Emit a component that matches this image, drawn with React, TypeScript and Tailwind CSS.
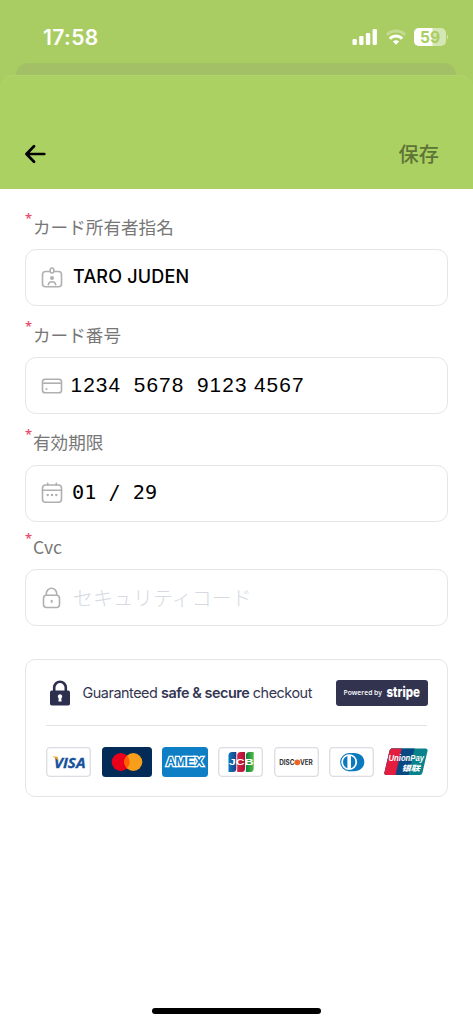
import type { ReactNode } from 'react';

const JP_FONT = "font-['Noto_Sans_CJK_JP',sans-serif]";

function StatusBar() {
  return (
    <div className="flex h-[75px] items-start justify-between pl-[43px] pr-[24px] pt-[24px] text-white">
      <span className="font-['Inter',sans-serif] text-[21px] font-semibold leading-[28px] tracking-[0.400px]">17:58</span>
      <div className="flex items-center gap-[8px] pt-[4px]">
        <svg width="26" height="18" viewBox="0 0 26 18" fill="currentColor">
          <rect x="0.5" y="11" width="4.3" height="6" rx="1.2" />
          <rect x="7.2" y="8" width="4.3" height="9" rx="1.2" />
          <rect x="13.9" y="5" width="4.3" height="12" rx="1.2" />
          <rect x="20.6" y="1" width="4.3" height="16" rx="1.2" />
        </svg>
        <svg width="20" height="18" viewBox="0 0 20 18" fill="none" stroke="currentColor">
          <path d="M0.8 6.8C6 1.7 14 1.7 19.2 6.8" strokeWidth="2.8" opacity="0.3" />
          <path d="M3.8 10.6c3.600-3.500 8.800-3.500 12.400 0" strokeWidth="3" />
          <path d="M6.9 13.6c1.9-1.8 4.3-1.8 6.2 0L10 16.8z" fill="currentColor" stroke="none" />
        </svg>
        <svg width="35" height="18" viewBox="0 0 35 18">
          <clipPath id="battery">
            <rect width="32" height="18" rx="5" />
          </clipPath>
          <g clipPath="url(#battery)" fill="#fff">
            <rect width="32" height="18" opacity="0.5" />
            <rect width="18.5" height="18" />
          </g>
          <path d="M33 6.500q2.400 2.500 0 5z" fill="#fff" opacity="0.5" />
          <text x="16" y="14.600" textAnchor="middle" textLength="20" fontFamily="Inter, sans-serif" fontSize="15.500" fontWeight="700" fill="#a9cd62">59</text>
        </svg>
      </div>
    </div>
  );
}

function BadgeIcon() {
  return (
    <svg width="22" height="22" viewBox="0 0 22 22" fill="none" stroke="#b0b0b0" strokeWidth="1.600" strokeLinecap="round">
      <path d="M8.600 4.500H4.500a3 3 0 0 0-3 3v9.300a3 3 0 0 0 3 3h13a3 3 0 0 0 3-3V7.500a3 3 0 0 0-3-3h-4.100" />
      <rect x="9.200" y="1" width="3.600" height="5" rx="1.700" />
      <circle cx="11" cy="11" r="2" fill="#b0b0b0" stroke="none" />
      <path d="M7.300 17.600c.8-3.800 6.600-3.800 7.400 0" />
    </svg>
  );
}

function CardIcon() {
  return (
    <svg width="22" height="22" viewBox="0 0 22 22" fill="none" stroke="#b0b0b0" strokeWidth="1.600">
      <rect x="1.500" y="4.200" width="19" height="13.600" rx="2.600" />
      <path d="M1.500 8.200h19" />
      <circle cx="5.500" cy="14" r="1" fill="#b0b0b0" stroke="none" />
    </svg>
  );
}

function CalendarIcon() {
  return (
    <svg width="22" height="22" viewBox="0 0 22 22" fill="none" stroke="#b0b0b0" strokeWidth="1.600" strokeLinecap="round">
      <rect x="1.500" y="3" width="19" height="17.300" rx="3" />
      <path d="M1.500 8.200h19M6.700 1.200v1.800M15.300 1.200v1.800" />
      <g fill="#b0b0b0" stroke="none">
        <circle cx="6.700" cy="13" r="1.200" />
        <circle cx="11" cy="13" r="1.200" />
        <circle cx="15.300" cy="13" r="1.200" />
      </g>
    </svg>
  );
}

function LockIcon() {
  return (
    <svg width="22" height="22" viewBox="0 0 22 22" fill="none" stroke="#b0b0b0" strokeWidth="1.600" strokeLinecap="round">
      <rect x="2.500" y="8.200" width="16" height="12.300" rx="3" />
      <path d="M5.300 8V6.500a5.200 5.200 0 0 1 10.400 0V8" />
      <path d="M10.700 13.600v1.400" strokeWidth="1.900" />
    </svg>
  );
}

interface FieldProps {
  label: string;
  icon: ReactNode;
  children: ReactNode;
}

function Field({ label, icon, children }: FieldProps) {
  return (
    <div>
      <div className="flex h-[26px] items-start">
        <span className="-mt-[2px] w-[8px] font-['Open_Sans',sans-serif] text-[13px] font-semibold leading-[14px] text-[#ea4b67]">*</span>
        <span className={`${JP_FONT} pt-[0.500px] text-[17.600px] leading-[26px] text-[#777]`}>{label}</span>
      </div>
      <div className="mt-[10px] flex h-[57px] items-center rounded-[11px] border-[1.500px] border-[#e6e6e6] pl-[15px]">
        {icon}
        <div className="ml-[10px] flex items-center whitespace-pre">{children}</div>
      </div>
    </div>
  );
}

function CardFrame({ children }: { children: ReactNode }) {
  return (
    <svg width="45" height="30" viewBox="0 0 45 30">
      <rect x="0.700" y="0.700" width="43.600" height="28.600" rx="3.200" fill="#fff" stroke="#dcdce2" strokeWidth="1.300" />
      {children}
    </svg>
  );
}

function PaymentLogos() {
  return (
    <div className="-mr-px flex items-center justify-between">
      <CardFrame>
        <text x="8" y="20.600" textLength="31.500" lengthAdjust="spacingAndGlyphs" fontFamily="Open Sans, sans-serif" fontSize="15" fontWeight="700" fontStyle="italic" fill="#16529b" stroke="#16529b" strokeWidth="0.300">VISA</text>
        <path d="M6 9.600h4.400q1 .1 1.300 1l.8 3.700Q10.300 10.800 6 9.600z" fill="#f5a623" />
      </CardFrame>
      <svg className="ml-[1px]" width="50" height="30" viewBox="0 0 50 30">
        <rect width="50" height="30" rx="3.500" fill="#022c57" />
        <circle cx="18.700" cy="15" r="9" fill="#eb001b" />
        <circle cx="31.300" cy="15" r="9" fill="#f79e1b" />
        <path d="M25 8.570a9 9 0 0 1 0 12.860a9 9 0 0 1 0-12.860z" fill="#ff5f00" />
      </svg>
      <svg width="46" height="30" viewBox="0 0 46 30">
        <rect width="46" height="30" rx="3.500" fill="#0e7fc5" />
        <text x="4" y="19.300" textLength="37.500" lengthAdjust="spacingAndGlyphs" fontFamily="Liberation Sans, sans-serif" fontSize="12" fontWeight="700" fill="#0e7fc5" stroke="#fff" strokeWidth="2.400" paintOrder="stroke">AMEX</text>
      </svg>
      <CardFrame>
        <defs>
          <linearGradient id="jcbBlue"><stop stopColor="#087bc1" /><stop offset="1" stopColor="#253d80" /></linearGradient>
          <linearGradient id="jcbRed"><stop stopColor="#d92544" /><stop offset="1" stopColor="#a90f35" /></linearGradient>
          <linearGradient id="jcbGreen"><stop stopColor="#078340" /><stop offset="1" stopColor="#55b947" /></linearGradient>
        </defs>
        <path d="M14 5h4.300v16.500q0 3.500-3.500 3.500h-4.300V8.500Q10.500 5 14 5z" fill="url(#jcbBlue)" />
        <path d="M22.700 5H27v16.500q0 3.500-3.500 3.500h-4.300V8.500q0-3.500 3.500-3.500z" fill="url(#jcbRed)" />
        <path d="M31.400 5h4.300v16.500q0 3.500-3.500 3.500h-4.300V8.500q0-3.500 3.500-3.500z" fill="url(#jcbGreen)" />
        <text x="11" y="18.300" textLength="24.500" lengthAdjust="spacingAndGlyphs" fontFamily="Liberation Sans, sans-serif" fontSize="8.800" fontWeight="700" fill="#fff">JCB</text>
      </CardFrame>
      <CardFrame>
        <text x="5.200" y="17.800" textLength="15.300" lengthAdjust="spacingAndGlyphs" fontFamily="Inter, sans-serif" fontSize="6.900" fontWeight="700" fill="#333">DISC</text>
        <circle cx="23.300" cy="15.300" r="2.900" fill="#ef641f" />
        <text x="26" y="17.800" textLength="12.800" lengthAdjust="spacingAndGlyphs" fontFamily="Inter, sans-serif" fontSize="6.900" fontWeight="700" fill="#333">VER</text>
      </CardFrame>
      <CardFrame>
        <path d="M19.500 6H25c6 0 10.300 3.800 10.300 9S31 24.200 25 24.200h-5.500z" fill="#0b79bd" />
        <circle cx="20.200" cy="15.100" r="8.500" fill="#fff" stroke="#0b79bd" strokeWidth="1.100" />
        <path d="M18.400 8.900v12.400a6.600 6.600 0 0 1 0-12.400zM22 8.900v12.400a6.600 6.600 0 0 0 0-12.400z" fill="#0b79bd" />
      </CardFrame>
      <svg width="44" height="30" viewBox="0 0 44 30">
        <clipPath id="unionpay">
          <path d="M7.500 1.500h34q2.600 0 2 2.500l-5 21.500q-.6 2.500-3 2.500h-33q-2.600 0-2-2.500l5-21.500q.5-2.500 2-2.500z" />
        </clipPath>
        <g clipPath="url(#unionpay)">
          <rect width="44" height="30" fill="#08838b" />
          <path d="M0 0h31l-7 30H0z" fill="#084983" />
          <path d="M0 0h18l-7 30H0z" fill="#e41c3d" />
        </g>
        <text x="4.500" y="13.500" textLength="35.500" lengthAdjust="spacingAndGlyphs" fontFamily="Liberation Sans, sans-serif" fontSize="8.600" fontWeight="700" fontStyle="italic" fill="#fff">UnionPay</text>
        <text x="17.500" y="23.600" textLength="18.500" lengthAdjust="spacingAndGlyphs" fontFamily="Noto Sans CJK SC, sans-serif" fontSize="7.600" fontWeight="900" fontStyle="italic" fill="#fff">银联</text>
      </svg>
    </div>
  );
}

function SecureCheckout() {
  return (
    <div className="mt-[33px] h-[138px] rounded-[10px] border-[1.500px] border-[#e6e6e6] pl-[20px] pr-[20px] pt-[20px]">
      <div className="-mr-px flex h-[26px] items-center text-[#343552]">
        <svg className="ml-[4px] shrink-0" width="20" height="26" viewBox="0 0 20 26">
          <path d="M4.200 12V7.600a5.800 5.800 0 0 1 11.600 0V12" fill="none" stroke="#2d2f4e" strokeWidth="2.600" />
          <rect y="10.500" width="20" height="15" rx="1.800" fill="#2d2f4e" />
          <path d="M10 14.300a2.200 2.200 0 0 1 1.300 4l.3 3.200H8.400l.3-3.200a2.200 2.200 0 0 1 1.300-4z" fill="#fff" />
        </svg>
        <p className="ml-[12.500px] whitespace-nowrap font-['Inter',sans-serif] text-[14.400px] leading-[26px] tracking-[-0.460px] text-[#343552]">
          Guaranteed <strong className="font-semibold">safe &amp; secure</strong> checkout
        </p>
        <div className="ml-auto flex h-[26px] w-[92px] shrink-0 items-center rounded-[3px] bg-[#32344f]">
          <svg width="92" height="26" viewBox="0 0 92 26" fill="#fff">
            <text x="7.500" y="15" textLength="38.500" lengthAdjust="spacingAndGlyphs" fontFamily="Open Sans, sans-serif" fontSize="7.300" fontWeight="600">Powered by</text>
            <text x="50.500" y="17" textLength="33.500" lengthAdjust="spacingAndGlyphs" fontFamily="Inter, sans-serif" fontSize="14" fontWeight="800">stripe</text>
          </svg>
        </div>
      </div>
      <div className="mb-[21px] mt-[19px] h-px bg-[#e2e2e5]" />
      <PaymentLogos />
    </div>
  );
}

export default function App() {
  return (
    <div className="flex h-[1024px] w-[473px] flex-col overflow-hidden bg-white">
      {/* Status bar with the previous sheet peeking out behind the header */}
      <div className="relative bg-[#a9cd62]">
        <div className="absolute left-[16px] top-[63px] h-[20px] w-[440px] rounded-t-[12px] bg-[#a4c067]" />
        <StatusBar />
        <header className="relative flex h-[114px] items-center justify-between rounded-t-[14px] border-t border-[#b2d46e] bg-[#acd163] pl-[25px] pr-[34px] pt-[43px]">
          <svg width="21" height="20" viewBox="0 0 21 20" fill="none" stroke="#000" strokeWidth="2.700" strokeLinecap="round" strokeLinejoin="round">
            <path d="M19.300 10H1.800M9 2.300L1.500 10 9 17.700" />
          </svg>
          <span className={`${JP_FONT} text-[20.200px] font-medium leading-[28px] text-[#5e7436]`}>保存</span>
        </header>
      </div>

      <main className="flex flex-col px-[25px] pt-[24px]">
        <div className="flex flex-col">
          <Field label="カード所有者指名" icon={<BadgeIcon />}>
            <span className="-mt-[1px] font-['Inter',sans-serif] text-[18px] font-medium leading-[24px] tracking-[0.200px] text-black">TARO JUDEN</span>
          </Field>
          <div className="mt-[15px]">
            <Field label="カード番号" icon={<CardIcon />}>
              <span className="-ml-[2.500px] -mt-px font-['Liberation_Sans',sans-serif] text-[20.800px] tracking-[1.100px] [word-spacing:-0.600px] text-black">1234  5678  9123 4567</span>
            </Field>
          </div>
          <div className="mt-[14.500px]">
            <Field label="有効期限" icon={<CalendarIcon />}>
              <span className="-ml-[1px] -mt-px font-['DejaVu_Sans_Mono',monospace] text-[20.200px] text-black">01 / 29</span>
            </Field>
          </div>
          <div className="mt-[11.500px]">
            <Field label="Cvc" icon={<LockIcon />}>
              <span className={`${JP_FONT} text-[20px] font-light text-[#d5dae2]`}>セキュリティコード</span>
            </Field>
          </div>
        </div>
        <SecureCheckout />
      </main>

      <div className="mb-[10px] mt-auto h-[6px] w-[169px] self-center rounded-full bg-black" />
    </div>
  );
}
